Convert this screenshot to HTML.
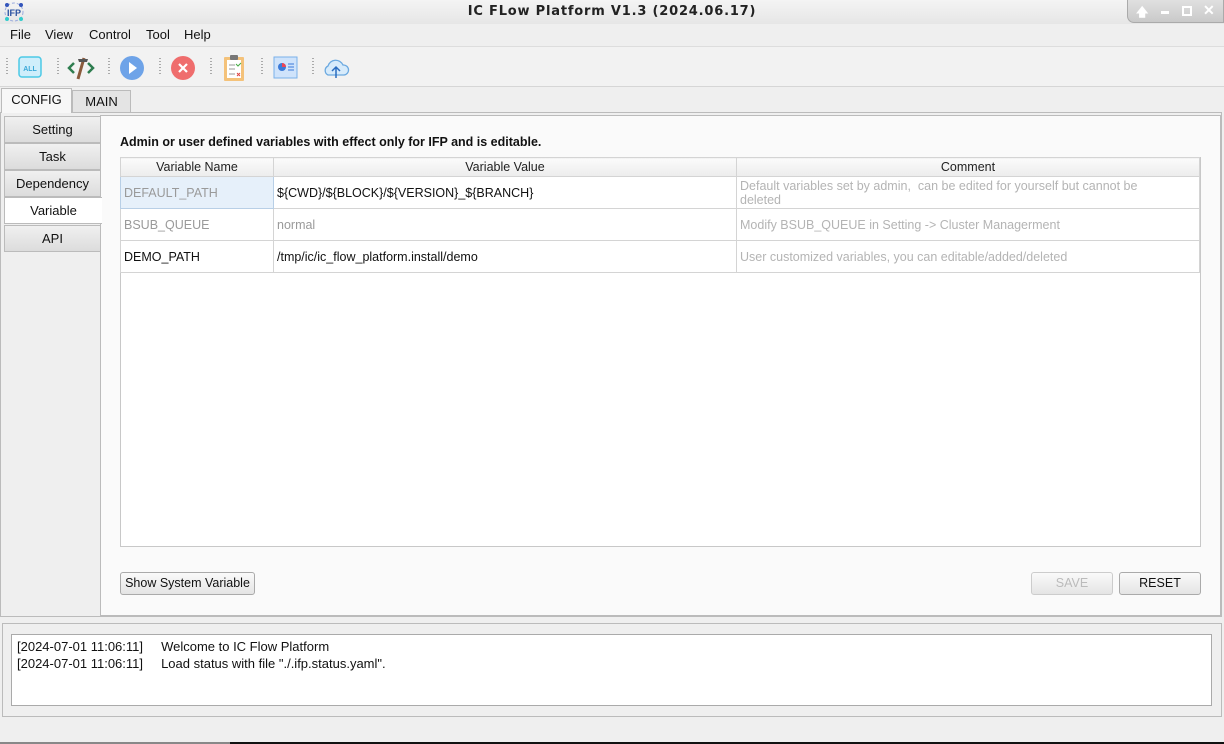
<!DOCTYPE html>
<html><head><style>
*{box-sizing:border-box;margin:0;padding:0}
body{width:1224px;height:744px;background:#efefef;font-family:"Liberation Sans","DejaVu Sans",sans-serif;font-size:13px;color:#111;position:relative;overflow:hidden}
.a{position:absolute}
.title{left:0;top:0;width:1224px;height:24px;background:linear-gradient(#f4f4f4,#e6e6e6);text-align:center;font:bold 13px "DejaVu Sans",sans-serif;line-height:24px;letter-spacing:.8px;color:#222}
.wc{left:1127px;top:0;width:97px;height:23px;background:linear-gradient(#e0e0e0,#c9c9c9);border:1px solid #aaa;border-top:none;border-radius:0 0 0 7px;color:#fff;font:bold 12px sans-serif}
.menu span{position:absolute;top:27px;font-size:13px}
.tb{left:0;top:46px;width:1224px;height:41px;border-top:1px solid #ddd;border-bottom:1px solid #d6d6d6;background:#f2f2f2}
.grip{position:absolute;top:58px;width:2px;height:18px;background:repeating-linear-gradient(#aaa 0 1px,transparent 1px 3px)}
.tab{position:absolute;text-align:center;border:1px solid #bbb;line-height:22px}
.side{position:absolute;left:4px;width:97px;height:27px;text-align:center;line-height:25px;background:linear-gradient(#f0f0f0,#dcdcdc);border:1px solid #bbb}
table{border-collapse:collapse;position:absolute;left:120px;top:157px;width:1080px;font-size:12.5px}
td,th{border:1px solid #d4d4d4;padding:0 3px;text-align:left;font-weight:normal;vertical-align:middle}
th{text-align:center;background:linear-gradient(#fbfbfb,#ececec);height:19px;color:#222}
td{height:32px;line-height:14px}
.g{color:#9a9a9a}.lg{color:#b4b4b4}
.btn{position:absolute;height:23px;border:1px solid #aaa;border-radius:3px;background:linear-gradient(#fafafa,#e4e4e4);text-align:center;line-height:21px;font-size:12.5px}
</style></head><body>
<div class="a title">IC FLow Platform V1.3 (2024.06.17)</div>
<svg class="a" style="left:3px;top:1px" width="22" height="22"><circle cx="11" cy="11" r="9" fill="none" stroke="#9ad" stroke-width="1" stroke-dasharray="3 2"/><circle cx="4" cy="4" r="2" fill="#3355bb"/><circle cx="18" cy="4" r="2" fill="#3355bb"/><circle cx="4" cy="18" r="2" fill="#3cc"/><circle cx="18" cy="18" r="2" fill="#3cc"/><text x="11" y="15" font-size="9" font-weight="bold" text-anchor="middle" fill="#2850a0" font-family="Liberation Sans">IFP</text></svg>
<div class="a wc"><span class="a" style="left:8px;top:3px">🡅</span><span class="a" style="left:33px;top:11px;width:8px;height:3px;background:#fff"></span><span class="a" style="left:54px;top:6px;width:10px;height:10px;border:2px solid #fff"></span><span class="a" style="left:75px;top:2px;font-size:14px">✕</span></div>
<div class="menu"><span style="left:10px">File</span><span style="left:45px">View</span><span style="left:89px">Control</span><span style="left:146px">Tool</span><span style="left:184px">Help</span></div>
<div class="a tb"></div>
<div class="grip" style="left:6px"></div><div class="grip" style="left:57px"></div><div class="grip" style="left:108px"></div><div class="grip" style="left:159px"></div><div class="grip" style="left:210px"></div><div class="grip" style="left:261px"></div><div class="grip" style="left:312px"></div>
<svg class="a" style="left:17px;top:55px" width="26" height="26"><rect x="2" y="2" width="22" height="20" rx="3" fill="#cfeefb" stroke="#4cc9e6" stroke-width="1.5"/><text x="13" y="16" font-size="7" font-weight="bold" text-anchor="middle" fill="#3aa8d8" font-family="Liberation Sans">ALL</text></svg>
<svg class="a" style="left:67px;top:54px" width="28" height="28"><path d="M7 9 L2 14 L7 19 M21 9 L26 14 L21 19" stroke="#2e7d4f" stroke-width="2.5" fill="none"/><path d="M17 4 L11 25" stroke="#8a5a3c" stroke-width="3"/><path d="M11 5 L21 5 L20 8 L12 8z" fill="#555"/></svg>
<svg class="a" style="left:119px;top:55px" width="26" height="26"><circle cx="13" cy="13" r="12" fill="#6ea3e8"/><path d="M10 7 L18 13 L10 19z" fill="#fff"/></svg>
<svg class="a" style="left:170px;top:55px" width="26" height="26"><circle cx="13" cy="13" r="12" fill="#ef6d6d"/><path d="M9 9 L17 17 M17 9 L9 17" stroke="#fff" stroke-width="2.2"/></svg>
<svg class="a" style="left:222px;top:54px" width="24" height="28"><rect x="2" y="3" width="20" height="24" rx="1" fill="#f4c27a"/><rect x="5" y="6" width="14" height="18" fill="#fff"/><rect x="8" y="1" width="8" height="5" rx="1" fill="#777"/><path d="M7 11h6M7 15h6M7 20h6" stroke="#999"/><path d="M14 10l2 2 3-3" stroke="#4a4" fill="none"/><path d="M15 19l3 3M18 19l-3 3" stroke="#d44"/></svg>
<svg class="a" style="left:273px;top:56px" width="26" height="24"><rect x="1" y="1" width="23" height="21" fill="#cfe3fb" stroke="#7ab0ea"/><circle cx="9" cy="11" r="4" fill="#3b7ad8"/><path d="M9 11 L9 7 A4 4 0 0 1 13 11z" fill="#e45"/><path d="M15 8h6M15 11h6M15 14h6" stroke="#3b7ad8"/></svg>
<svg class="a" style="left:322px;top:56px" width="28" height="24"><path d="M6 19 A5 5 0 0 1 6 10 A8 8 0 0 1 21 9 A5 5 0 0 1 22 19z" fill="#d7ebfb" stroke="#6ba9e0" stroke-width="1.3"/><path d="M14 22 V12 M10 15 L14 11 L18 15" stroke="#2a6cc0" stroke-width="1.5" fill="none"/></svg>
<div class="tab" style="left:72px;top:90px;width:59px;height:23px;background:#e4e4e4">MAIN</div>
<div class="tab" style="left:1px;top:88px;width:71px;height:25px;background:#f7f7f7;border-bottom:none;z-index:2">CONFIG</div>
<div class="a" style="left:0;top:112px;width:1222px;height:505px;border:1px solid #bbb;background:#efefef"></div>
<div class="a" style="left:100px;top:115px;width:1121px;height:501px;border:1px solid #bbb;background:#fafafa"></div>
<div class="side" style="top:116px">Setting</div>
<div class="side" style="top:143px">Task</div>
<div class="side" style="top:170px">Dependency</div>
<div class="side" style="top:197px;background:#fff;width:98px;border-right:none;z-index:2">Variable</div>
<div class="side" style="top:225px">API</div>
<div class="a" style="left:120px;top:135px;font-weight:bold;font-size:12.5px">Admin or user defined variables with effect only for IFP and is editable.</div>
<div class="a" style="left:120px;top:157px;width:1081px;height:390px;border:1px solid #c8c8c8;background:#fff"></div>
<table>
<tr><th style="width:153px">Variable Name</th><th style="width:463px">Variable Value</th><th>Comment</th></tr>
<tr><td class="g" style="background:#e6f0fa;border:1px solid #b8cfe6">DEFAULT_PATH</td><td>${CWD}/${BLOCK}/${VERSION}_${BRANCH}</td><td class="lg">Default variables set by admin,&nbsp; can be edited for yourself but cannot be<br>deleted</td></tr>
<tr><td class="g">BSUB_QUEUE</td><td class="g">normal</td><td class="lg">Modify BSUB_QUEUE in Setting -&gt; Cluster Managerment</td></tr>
<tr><td>DEMO_PATH</td><td>/tmp/ic/ic_flow_platform.install/demo</td><td class="lg">User customized variables, you can editable/added/deleted</td></tr>
</table>
<div class="btn" style="left:120px;top:572px;width:135px">Show System Variable</div>
<div class="btn" style="left:1031px;top:572px;width:82px;color:#bbb;border-color:#ccc">SAVE</div>
<div class="btn" style="left:1119px;top:572px;width:82px">RESET</div>
<div class="a" style="left:2px;top:623px;width:1220px;height:94px;border:1px solid #bbb;background:#efefef"></div>
<div class="a" style="left:11px;top:634px;width:1201px;height:72px;border:1px solid #aaa;background:#fff;padding:3px 5px;font-size:13px;line-height:17px;white-space:pre">[2024-07-01 11:06:11]     Welcome to IC Flow Platform
[2024-07-01 11:06:11]     Load status with file "./.ifp.status.yaml".</div>
<div class="a" style="left:0;top:742px;width:1224px;height:2px;background:#888"></div>
<div class="a" style="left:230px;top:742px;width:994px;height:2px;background:#111"></div>
</body></html>
